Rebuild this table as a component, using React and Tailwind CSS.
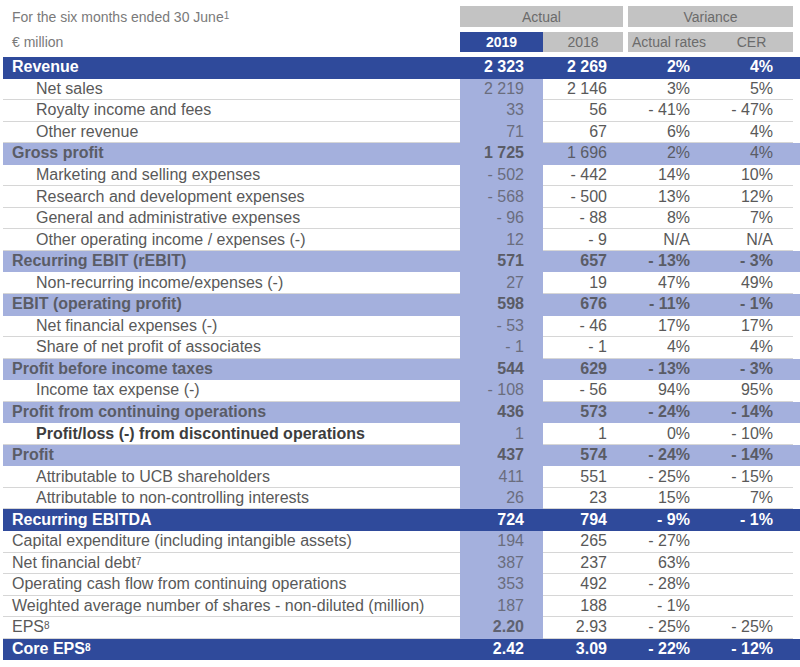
import React from 'react';

const rows = [
  { label: 'Revenue', v: ['2 323', '2 269', '2%', '4%'], type: 'dark' },
  { label: 'Net sales', v: ['2 219', '2 146', '3%', '5%'], type: 'sub' },
  { label: 'Royalty income and fees', v: ['33', '56', '- 41%', '- 47%'], type: 'sub' },
  { label: 'Other revenue', v: ['71', '67', '6%', '4%'], type: 'sub' },
  { label: 'Gross profit', v: ['1 725', '1 696', '2%', '4%'], type: 'band', plainNums: true },
  { label: 'Marketing and selling expenses', v: ['- 502', '- 442', '14%', '10%'], type: 'sub' },
  { label: 'Research and development expenses', v: ['- 568', '- 500', '13%', '12%'], type: 'sub' },
  { label: 'General and administrative expenses', v: ['- 96', '- 88', '8%', '7%'], type: 'sub' },
  { label: 'Other operating income / expenses (-)', v: ['12', '- 9', 'N/A', 'N/A'], type: 'sub' },
  { label: 'Recurring EBIT (rEBIT)', v: ['571', '657', '- 13%', '- 3%'], type: 'band' },
  { label: 'Non-recurring income/expenses (-)', v: ['27', '19', '47%', '49%'], type: 'sub' },
  { label: 'EBIT (operating profit)', v: ['598', '676', '- 11%', '- 1%'], type: 'band' },
  { label: 'Net financial expenses (-)', v: ['- 53', '- 46', '17%', '17%'], type: 'sub' },
  { label: 'Share of net profit of associates', v: ['- 1', '- 1', '4%', '4%'], type: 'sub' },
  { label: 'Profit before income taxes', v: ['544', '629', '- 13%', '- 3%'], type: 'band' },
  { label: 'Income tax expense (-)', v: ['- 108', '- 56', '94%', '95%'], type: 'sub' },
  { label: 'Profit from continuing operations', v: ['436', '573', '- 24%', '- 14%'], type: 'band' },
  { label: 'Profit/loss (-) from discontinued operations', v: ['1', '1', '0%', '- 10%'], type: 'subbold' },
  { label: 'Profit', v: ['437', '574', '- 24%', '- 14%'], type: 'band' },
  { label: 'Attributable to UCB shareholders', v: ['411', '551', '- 25%', '- 15%'], type: 'sub' },
  { label: 'Attributable to non-controlling interests', v: ['26', '23', '15%', '7%'], type: 'sub' },
  { label: 'Recurring EBITDA', v: ['724', '794', '- 9%', '- 1%'], type: 'dark' },
  { label: 'Capital expenditure (including intangible assets)', v: ['194', '265', '- 27%', ''], type: 'plain' },
  { label: 'Net financial debt', sup: '7', v: ['387', '237', '63%', ''], type: 'plain' },
  { label: 'Operating cash flow from continuing operations', v: ['353', '492', '- 28%', ''], type: 'plain' },
  { label: 'Weighted average number of shares - non-diluted (million)', v: ['187', '188', '- 1%', ''], type: 'plain' },
  { label: 'EPS', sup: '8', v: ['2.20', '2.93', '- 25%', '- 25%'], type: 'plain', boldFirst: true },
  { label: 'Core EPS', sup: '8', v: ['2.42', '3.09', '- 22%', '- 12%'], type: 'dark' },
];

const Sup = ({ children }) => (
  <sup className="relative -top-[1px] text-[10px] leading-none">{children}</sup>
);

const Row = ({ row }) => {
  const dark = row.type === 'dark';
  const band = row.type === 'band';
  const white = !dark && !band;
  const indent = row.type === 'sub' || row.type === 'subbold';

  const rowBg = dark ? 'bg-[#2f4a9b]' : band ? 'bg-[#a4b0dd]' : 'bg-white';
  const line = white ? 'border-b border-[#d6d6d6]' : 'border-b border-transparent';
  const color = dark ? 'text-white' : band ? 'text-[#5a5c66]' : 'text-[#595959]';
  const labelWeight = dark || band || row.type === 'subbold' ? 'font-bold' : '';
  const labelColor = row.type === 'subbold' ? 'text-[#3d3d3d]' : '';

  const numClass = (i) => {
    if (dark) return 'font-bold';
    if (band) return row.plainNums && i > 0 ? '' : 'font-bold';
    if (i === 0) return row.boldFirst ? 'font-bold text-[#5f6270]' : 'text-[#6a6d7d]';
    return '';
  };

  return (
    <div className={`grid h-[21.55px] grid-cols-[457px_83px_80px_5px_82px_83px] ${rowBg} ${color}`}>
      <div className={`flex items-center ${indent ? 'pl-[33px]' : 'pl-[9px]'} ${line} ${labelWeight} ${labelColor} whitespace-nowrap`}>
        {row.label}
        {row.sup && <Sup>{row.sup}</Sup>}
      </div>
      <div
        className={`flex items-center justify-end pr-[19px] ${white ? 'bg-[#a4b0dd] border-b border-[#a4b0dd]' : line} ${numClass(0)}`}
      >
        {row.v[0]}
      </div>
      <div className={`flex items-center justify-end pr-[16px] ${line} ${numClass(1)}`}>{row.v[1]}</div>
      <div className={line} />
      <div className={`flex items-center justify-end pr-[20px] ${line} ${numClass(2)}`}>{row.v[2]}</div>
      <div className={`flex items-center justify-end pr-[20px] ${line} ${numClass(3)}`}>{row.v[3]}</div>
    </div>
  );
};

export default function App() {
  return (
    <div className="h-[667px] w-[800px] bg-white pl-[3px] pt-[6px] font-['Liberation_Sans',Arial,sans-serif] text-[16px] leading-none">
      <div className="grid h-[21px] grid-cols-[457px_163px_5px_165px] whitespace-nowrap text-[14px] text-[#6b6b6b]">
        <div className="flex items-center pl-[9px] text-[#7a7a7a]">
          For the six months ended 30 June<Sup>1</Sup>
        </div>
        <div className="flex items-center justify-center bg-[#c3c3c3]">Actual</div>
        <div />
        <div className="flex items-center justify-center bg-[#c3c3c3]">Variance</div>
      </div>
      <div className="mt-[5px] grid h-[20px] grid-cols-[457px_83px_80px_5px_82px_83px] whitespace-nowrap text-[14px] text-[#6b6b6b]">
        <div className="flex items-center pl-[9px] text-[#7a7a7a]">€ million</div>
        <div className="flex items-center justify-center bg-[#2f4a9b] font-bold text-white">2019</div>
        <div className="flex items-center justify-center bg-[#c3c3c3]">2018</div>
        <div />
        <div className="flex items-center justify-center bg-[#c3c3c3]">Actual rates</div>
        <div className="flex items-center justify-center bg-[#c3c3c3]">CER</div>
      </div>
      <div className="mt-[5px]">
        {rows.map((row) => (
          <Row key={row.label} row={row} />
        ))}
      </div>
    </div>
  );
}
